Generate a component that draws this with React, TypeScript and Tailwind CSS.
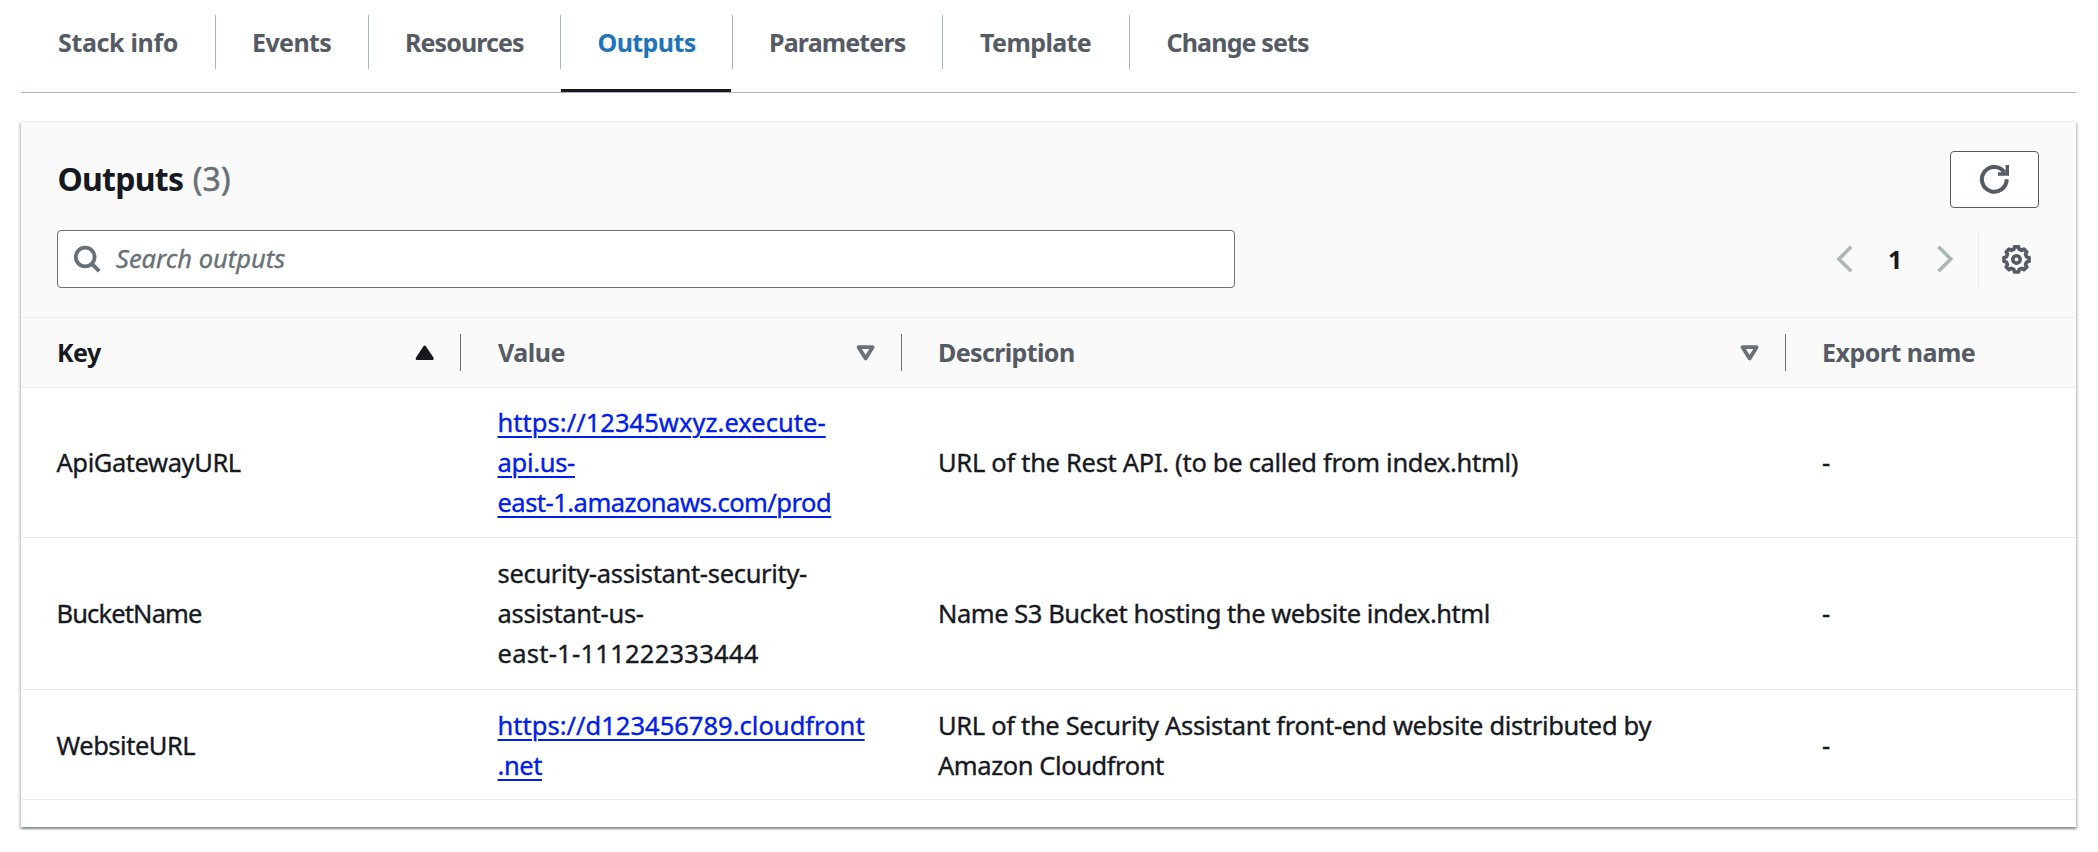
import type { ReactNode } from "react";

const tabs = [
  { label: "Stack info", box: "w-[195px]", text: "tracking-[-0.35px] pl-[1px]" },
  { label: "Events", box: "w-[153px]", text: "tracking-[-0.6px]" },
  { label: "Resources", box: "w-[192px]", text: "tracking-[-0.9px]" },
  { label: "Outputs", box: "w-[172px]", text: "tracking-[-0.6px] pl-[0.5px]", active: true },
  { label: "Parameters", box: "w-[210px]", text: "tracking-[-0.85px]" },
  { label: "Template", box: "w-[187px]", text: "tracking-[-0.6px] pl-[1px]" },
  { label: "Change sets", box: "w-[220px]", text: "tracking-[-0.85px] pl-[0.5px]" },
];

const columns = [
  { label: "Key", text: "text-[#16191f] tracking-[-0.5px]", sort: "asc" },
  { label: "Value", text: "pl-[1px] tracking-[-0.5px]", sort: "none" },
  { label: "Description", text: "tracking-[-0.62px]", sort: "none" },
  { label: "Export name", text: "tracking-[-0.52px]", sort: null },
];

const grid = "grid grid-cols-[440px_441px_884px_1fr]";

type Line = { text: string; fit: string };
type Row = { pad: string; key: Line; value: Line[]; link: boolean; description: Line[] };

const rows: Row[] = [
  {
    pad: "pt-[14px] pb-[15px]",
    key: { text: "ApiGatewayURL", fit: "tracking-[-0.42px]" },
    link: true,
    value: [
      { text: "https://12345wxyz.execute-", fit: "tracking-[0.04px]" },
      { text: "api.us-", fit: "tracking-[-0.3px]" },
      { text: "east-1.amazonaws.com/prod", fit: "tracking-[-0.52px]" },
    ],
    description: [
      { text: "URL of the Rest API. (to be called from index.html)", fit: "tracking-[-0.3px]" },
    ],
  },
  {
    pad: "pt-[15px] pb-[16px]",
    key: { text: "BucketName", fit: "tracking-[-0.86px]" },
    link: false,
    value: [
      { text: "security-assistant-security-", fit: "tracking-[-0.32px]" },
      { text: "assistant-us-", fit: "tracking-[-0.32px]" },
      { text: "east-1-111222333444", fit: "tracking-[0.26px]" },
    ],
    description: [
      { text: "Name S3 Bucket hosting the website index.html", fit: "tracking-[-0.45px]" },
    ],
  },
  {
    pad: "pt-[15px] pb-[14px]",
    key: { text: "WebsiteURL", fit: "tracking-[-0.48px]" },
    link: true,
    value: [
      { text: "https://d123456789.cloudfront", fit: "tracking-[0.02px]" },
      { text: ".net", fit: "tracking-[-0.4px]" },
    ],
    description: [
      { text: "URL of the Security Assistant front-end website distributed by", fit: "tracking-[-0.33px]" },
      { text: "Amazon Cloudfront", fit: "tracking-[-0.42px]" },
    ],
  },
];

function SearchIcon() {
  return (
    <svg className="h-8 w-8" viewBox="0 0 32 32" fill="none" stroke="#687078" strokeWidth="3.8">
      <circle cx="14.2" cy="14" r="9.4" />
      <path d="M20.6 20.6 28.2 28.2" />
    </svg>
  );
}

function RefreshIcon() {
  return (
    <svg className="h-8 w-8" viewBox="0 0 32 32" fill="none" stroke="#545b64">
      <path strokeWidth="4" d="M28.7 16.3A12.4 12.4 0 1 1 26.6 9.4" />
      <path strokeWidth="3.4" d="M29.3 2V11H20" />
    </svg>
  );
}

const gearPath =
  Array.from({ length: 8 }, (_, k) =>
    [
      [-15, 10.4],
      [-9, 12.7],
      [9, 12.7],
      [15, 10.4],
    ].map(([offset, radius]) => {
      const a = ((k * 45 + offset) * Math.PI) / 180;
      return `${(16.5 + radius * Math.cos(a)).toFixed(2)} ${(16.4 + radius * Math.sin(a)).toFixed(2)}`;
    }),
  )
    .flat()
    .map((p, i) => (i === 0 ? "M" : "L") + p)
    .join("") + "Z";

function GearIcon() {
  return (
    <svg className="h-8 w-8" viewBox="0 0 32 32" fill="none" stroke="#545b64" strokeWidth="3.6" strokeLinejoin="round">
      <path d={gearPath} />
      <circle cx="16.5" cy="16.4" r="3.7" />
    </svg>
  );
}

function Chevron({ d }: { d: string }) {
  return (
    <svg className="h-[30px] w-[18px]" viewBox="0 0 18 30" fill="none" stroke="#aab7b8" strokeWidth="3.6">
      <path d={d} />
    </svg>
  );
}

function SortIcon({ sort }: { sort: string }) {
  return (
    <svg className="h-5 w-5" viewBox="0 0 20 20" strokeLinejoin="round">
      {sort === "asc" ? (
        <path d="M9.7 4 17.3 15.5H2.1Z" fill="#16191f" stroke="#16191f" strokeWidth="3" />
      ) : (
        <path d="M2.6 4.2H16.6L9.6 15.5Z" fill="none" stroke="#687078" strokeWidth="3.8" />
      )}
    </svg>
  );
}

function Cell({ children, className = "" }: { children: ReactNode; className?: string }) {
  return (
    <div className={`flex flex-col items-start justify-center whitespace-nowrap [-webkit-text-stroke:0.35px_currentColor] ${className}`}>
      {children}
    </div>
  );
}

export default function App() {
  return (
    <div className="h-[852px] w-full bg-white pt-[15px] pr-[22px] pl-[21px] font-['Noto_Sans',sans-serif] text-[25.5px] leading-[40px] text-[#16191f]">
      <nav className="flex h-[78px] border-b border-[#aab7b8] text-[25px] font-bold text-[#545b64]">
        {tabs.map((tab, i) => (
          <div key={tab.label} className={`flex shrink-0 flex-col ${tab.box}`}>
            <div className={`flex h-[54px] items-center pl-9 ${i < tabs.length - 1 ? "border-r border-[#aab7b8]" : ""}`}>
              <span className={`whitespace-nowrap ${tab.text} ${tab.active ? "text-[#2074bb]" : ""}`}>{tab.label}</span>
            </div>
            {tab.active && <div className="mt-5 mr-[2px] h-[3px] shrink-0 bg-[#16191f]" />}
          </div>
        ))}
      </nav>

      <section className="mt-7 h-[706px] border-t border-[#eaeded] bg-white shadow-[0_2px_2px_0_rgba(0,28,36,0.3),2px_2px_2px_0_rgba(0,28,36,0.15),-2px_2px_2px_0_rgba(0,28,36,0.15)]">
        <header className="h-[196px] border-b border-[#eaeded] bg-[#fafafa] pt-[29px] pr-[37px] pl-9">
          <div className="flex h-[57px] items-start justify-between">
            <h2 className="mt-1 pl-[0.5px] text-[32px] leading-[48px] font-bold tracking-[-0.75px]">
              Outputs{" "}
              <span className="pl-[2px] font-normal tracking-[0.1px] text-[#687078] [-webkit-text-stroke:0.5px_currentColor]">(3)</span>
            </h2>
            <button className="flex h-[57px] w-[89px] items-center justify-center rounded-[4px] border border-[#545b64] bg-white pr-[1px] pb-[1px]">
              <RefreshIcon />
            </button>
          </div>
          <div className="mt-[22px] flex h-[58px] items-center justify-between">
            <div className="flex h-[58px] w-[1178px] items-center rounded-[4px] border border-[#687078] bg-white pl-[13px]">
              <SearchIcon />
              <span className="ml-[13px] pb-[2px] text-[#687078] italic [-webkit-text-stroke:0.35px_currentColor]">Search outputs</span>
            </div>
            <div className="flex h-[58px] items-center pr-[7px]">
              <Chevron d="M16.2 2.8 3.9 15 16.2 27.2" />
              <span className="mr-[35px] ml-[35px] w-[14px] text-center text-[25px] font-bold">1</span>
              <Chevron d="M1.5 2.8 13.8 15 1.5 27.2" />
              <div className="ml-[23px] h-[57px] w-px bg-[#eaeded]" />
              <div className="ml-[21px]">
                <GearIcon />
              </div>
            </div>
          </div>
        </header>

        <div className={`${grid} h-[70px] border-b border-[#eaeded] bg-[#fafafa] text-[25px] font-bold text-[#545b64]`}>
          {columns.map((col) => (
            <div key={col.label} className={`mt-4 flex h-[37px] items-center justify-between pr-[25px] pl-9 ${col.sort ? "border-r border-[#687078]" : ""}`}>
              <span className={`pb-[2px] whitespace-nowrap ${col.text}`}>{col.label}</span>
              {col.sort && <SortIcon sort={col.sort} />}
            </div>
          ))}
        </div>

        {rows.map((row) => (
          <div key={row.key.text} className={`${grid} border-b border-[#eaeded] ${row.pad}`}>
            <Cell className="pl-[35.5px]">
              <span className={row.key.fit}>{row.key.text}</span>
            </Cell>
            <Cell className="pl-[36.5px]">
              {row.value.map((line) =>
                row.link ? (
                  <a key={line.text} className={`text-[#0020e8] underline decoration-2 underline-offset-4 ${line.fit}`}>
                    {line.text}
                  </a>
                ) : (
                  <span key={line.text} className={line.fit}>
                    {line.text}
                  </span>
                ),
              )}
            </Cell>
            <Cell className="pl-9">
              {row.description.map((line) => (
                <span key={line.text} className={line.fit}>
                  {line.text}
                </span>
              ))}
            </Cell>
            <Cell className="pl-9">-</Cell>
          </div>
        ))}
      </section>
    </div>
  );
}
